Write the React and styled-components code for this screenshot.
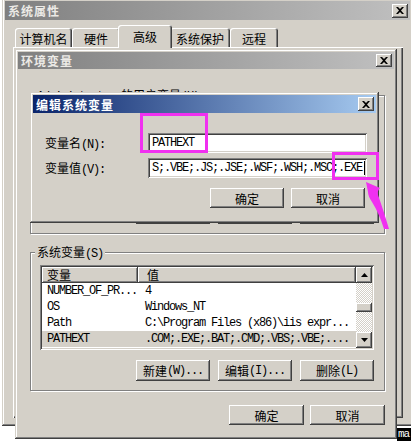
import React from 'react';
import styled, { createGlobalStyle, css } from 'styled-components';

const FACE = '#d4d0c8';
const CJK = '"Noto Sans CJK SC", "Liberation Sans", sans-serif';
const MONO = '"Liberation Mono", "DejaVu Sans Mono", monospace';

const GlobalStyle = createGlobalStyle`
  html, body { margin: 0; padding: 0; background: #fff; }
  body { font-family: ${CJK}; font-size: 12px; color: #000; }
  * { box-sizing: border-box; }
`;

const raised = css`
  box-shadow: inset -1px -1px #404040, inset 1px 1px #fff, inset -2px -2px #808080, inset 2px 2px ${FACE};
`;
const frame = css`
  box-shadow: inset -1px -1px #404040, inset 1px 1px ${FACE}, inset -2px -2px #808080, inset 2px 2px #fff;
`;
const sunken = css`
  box-shadow: inset 1px 1px #808080, inset -1px -1px #fff, inset 2px 2px #404040, inset -2px -2px ${FACE};
`;

const Screen = styled.div`
  position: relative;
  width: 411px;
  height: 441px;
  overflow: hidden;
  background: #fff;
`;

const TaskbarScrap = styled.div`
  position: absolute;
  right: 0;
  bottom: 0;
  width: 14px;
  height: 13px;
  background: #000;
  color: #fff;
  font-family: ${MONO};
  font-size: 11px;
  line-height: 13px;
  padding-left: 1px;
  overflow: hidden;
  letter-spacing: -1px;
`;

const Window = styled.section`
  position: absolute;
  left: ${p => p.$x}px;
  top: ${p => p.$y}px;
  width: ${p => p.$w}px;
  height: ${p => p.$h}px;
  padding: 3px;
  background: ${FACE};
  display: flex;
  flex-direction: column;
  ${frame}
`;

const TitleBar = styled.header`
  flex: none;
  height: ${p => p.$h}px;
  display: flex;
  align-items: center;
  justify-content: space-between;
  padding: 0 2px 0 3px;
  background: linear-gradient(to right, ${p => (p.$active ? '#0a246a, #a6caf0' : '#808080, #c0c0c0')});
  color: ${p => (p.$active ? '#fff' : '#eceae6')};
  font-family: ${CJK};
  font-weight: bold;
  font-size: 12px;
  letter-spacing: 1px;
  white-space: nowrap;
`;

const CloseBox = styled.span`
  width: 16px;
  height: ${p => p.$h}px;
  flex: none;
  display: flex;
  align-items: center;
  justify-content: center;
  background: ${FACE};
  ${raised}
`;

const CloseButton = ({ h }) => (
  <CloseBox $h={h}>
    <svg width="8" height="7" viewBox="0 0 8 7">
      <path d="M0 0h2l2 2 2-2h2L5 3.5 8 7H6L4 5 2 7H0l3-3.5z" fill="#000" />
    </svg>
  </CloseBox>
);

const TabArea = styled.div`
  flex: 1;
  display: flex;
  flex-direction: column;
  padding: 5px 7px 5px 8px;
`;

const TabStrip = styled.div`
  height: 22px;
  display: flex;
  align-items: flex-end;
  padding-left: 2px;
  flex: none;
`;

const Tab = styled.div`
  position: relative;
  z-index: ${p => (p.$active ? 1 : 0)};
  width: ${p => p.$w}px;
  height: ${p => (p.$active ? 23 : 19)}px;
  margin: 0 ${p => (p.$active ? -2 : 0)}px ${p => (p.$active ? -1 : 0)}px;
  padding-top: ${p => (p.$active ? 0 : 2)}px;
  background: ${FACE};
  border-radius: 3px 3px 0 0;
  box-shadow: inset 1px 1px #fff, inset -1px 0 #404040, inset -2px 0 #808080;
  display: flex;
  align-items: center;
  justify-content: center;
  font-size: 12px;
`;

const TabPanel = styled.div`
  flex: 1;
  box-shadow: inset 1px 1px #fff, inset -1px -1px #404040, inset -2px -2px #808080;
`;

const EnvBody = styled.div`
  flex: 1;
  display: flex;
  flex-direction: column;
  gap: 11px;
  padding: 19px 9px 0 12px;
`;

const GroupWrap = styled.div`
  position: relative;
  padding-top: 7px;
`;

const GroupFrame = styled.div`
  border: 1px solid #808080;
  box-shadow: inset 1px 1px #fff, 1px 1px #fff;
  padding: 12px 10px 9px 9px;
  display: flex;
  flex-direction: column;
  gap: 10px;
`;

const GroupCaption = styled.span`
  position: absolute;
  left: 5px;
  top: 0;
  padding: 0 2px;
  line-height: 14px;
  background: ${FACE};
  font-size: 12px;
  white-space: nowrap;
`;

const Latin = styled.span`
  font-family: ${MONO};
  font-size: 12px;
  letter-spacing: -1.2px;
`;

const ButtonRow = styled.div`
  display: flex;
  justify-content: flex-end;
  gap: ${p => p.$gap}px;
  margin-top: ${p => p.$mt || 0}px;
  padding-right: ${p => p.$pr || 0}px;
`;

const PushButton = styled.button`
  width: ${p => p.$w}px;
  height: ${p => p.$h}px;
  border: 0;
  padding: 0;
  background: ${FACE};
  font-family: ${CJK};
  font-size: 12px;
  color: #000;
  display: flex;
  align-items: center;
  justify-content: center;
  white-space: nowrap;
  ${raised}
`;

const ListBox = styled.div`
  height: ${p => p.$h}px;
  padding: 2px;
  background: #fff;
  display: flex;
  ${sunken}
`;

const ListMain = styled.div`
  flex: 1;
  min-width: 0;
  display: flex;
  flex-direction: column;
  overflow: hidden;
`;

const HeaderRow = styled.div`
  flex: none;
  height: 16px;
  display: flex;
`;

const HeaderCell = styled.div`
  width: ${p => (p.$w ? `${p.$w}px` : 'auto')};
  flex: ${p => (p.$w ? 'none' : 1)};
  padding-left: ${p => p.$pad}px;
  background: ${FACE};
  line-height: 16px;
  font-size: 12px;
  box-shadow: inset -1px -1px #404040, inset 1px 1px #fff, inset -2px -2px #808080;
`;

const Row = styled.div`
  height: 16px;
  display: flex;
  align-items: center;
  background: ${p => (p.$selected ? FACE : 'transparent')};
`;

const Cell = styled.div`
  width: ${p => (p.$w ? `${p.$w}px` : 'auto')};
  flex: ${p => (p.$w ? 'none' : 1)};
  padding-left: ${p => p.$pad}px;
  font-family: ${MONO};
  font-size: 12px;
  letter-spacing: -1.2px;
  white-space: nowrap;
  overflow: hidden;
`;

const ScrollBar = styled.div`
  width: 16px;
  flex: none;
  display: flex;
  flex-direction: column;
  background: repeating-conic-gradient(#fff 0 25%, ${FACE} 0 50%) 0 0 / 2px 2px;
`;

const ScrollButton = styled.div`
  height: 16px;
  flex: none;
  display: flex;
  align-items: center;
  justify-content: center;
  background: ${FACE};
  ${raised}
`;

const ScrollTrack = styled.div`
  flex: 1;
`;

const ScrollThumb = styled.div`
  height: 9px;
  margin-top: 20px;
  background: ${FACE};
  ${raised}
`;

const DialogBody = styled.div`
  flex: 1;
  display: flex;
  flex-direction: column;
  gap: 5px;
  padding: 20px 9px 0 12px;
`;

const FieldRow = styled.div`
  display: flex;
  align-items: center;
`;

const FieldLabel = styled.label`
  width: 103px;
  flex: none;
  font-size: 12px;
  white-space: nowrap;
`;

const TextBox = styled.div`
  flex: 1;
  height: 20px;
  padding: 0 4px;
  background: #fff;
  display: flex;
  align-items: center;
  font-family: ${MONO};
  font-size: 12px;
  letter-spacing: -1.2px;
  white-space: nowrap;
  overflow: hidden;
  ${sunken}
`;

const Caret = styled.span`
  width: 1px;
  height: 14px;
  margin-left: 2px;
  background: #000;
  flex: none;
`;

const Overlay = styled.svg`
  position: absolute;
  left: 0;
  top: 0;
  pointer-events: none;
`;

const tabs = [
  { label: '计算机名', w: 57 },
  { label: '硬件', w: 48 },
  { label: '高级', w: 54, active: true },
  { label: '系统保护', w: 60 },
  { label: '远程', w: 48 },
];

const systemVars = [
  ['NUMBER_OF_PR...', '4'],
  ['OS', 'Windows_NT'],
  ['Path', 'C:\\Program Files (x86)\\iis expr...'],
  ['PATHEXT', '.COM;.EXE;.BAT;.CMD;.VBS;.VBE;....', true],
];

const Arrow = ({ up }) => (
  <svg width="7" height="4" viewBox="0 0 7 4">
    <path d={up ? 'M3.5 0L7 4H0z' : 'M0 0h7L3.5 4z'} fill="#000" />
  </svg>
);

const VarButtons = () => (
  <ButtonRow $gap={8}>
    <PushButton $w={74} $h={21}>新建<Latin>(W)...</Latin></PushButton>
    <PushButton $w={74} $h={21}>编辑<Latin>(I)...</Latin></PushButton>
    <PushButton $w={74} $h={21}>删除<Latin>(L)</Latin></PushButton>
  </ButtonRow>
);

export default function App() {
  return (
    <>
      <GlobalStyle />
      <Screen>
        <TaskbarScrap>ma</TaskbarScrap>

        <Window $x={2} $y={-2} $w={411} $h={428}>
          <TitleBar $h={19}>
            <span>系统属性</span>
            <CloseButton h={14} />
          </TitleBar>
          <TabArea>
            <TabStrip>
              {tabs.map(t => (
                <Tab key={t.label} $w={t.w} $active={t.active}>{t.label}</Tab>
              ))}
            </TabStrip>
            <TabPanel />
          </TabArea>
        </Window>

        <Window $x={15} $y={49} $w={382} $h={390}>
          <TitleBar $h={17}>
            <span>环境变量</span>
            <CloseButton h={13} />
          </TitleBar>
          <EnvBody>
            <GroupWrap>
              <GroupCaption><Latin>Administrator </Latin>的用户变量<Latin>(U)</Latin></GroupCaption>
              <GroupFrame>
                <ListBox $h={85} />
                <VarButtons />
              </GroupFrame>
            </GroupWrap>
            <GroupWrap>
              <GroupCaption>系统变量<Latin>(S)</Latin></GroupCaption>
              <GroupFrame>
                <ListBox $h={85}>
                  <ListMain>
                    <HeaderRow>
                      <HeaderCell $w={96} $pad={5}>变量</HeaderCell>
                      <HeaderCell $pad={9}>值</HeaderCell>
                    </HeaderRow>
                    {systemVars.map(([name, value, sel]) => (
                      <Row key={name} $selected={sel}>
                        <Cell $w={96} $pad={5}>{name}</Cell>
                        <Cell $pad={7}>{value}</Cell>
                      </Row>
                    ))}
                  </ListMain>
                  <ScrollBar>
                    <ScrollButton><Arrow up /></ScrollButton>
                    <ScrollTrack><ScrollThumb /></ScrollTrack>
                    <ScrollButton><Arrow /></ScrollButton>
                  </ScrollBar>
                </ListBox>
                <VarButtons />
              </GroupFrame>
            </GroupWrap>
            <ButtonRow $gap={6} $mt={3}>
              <PushButton $w={75} $h={20}>确定</PushButton>
              <PushButton $w={75} $h={20}>取消</PushButton>
            </ButtonRow>
          </EnvBody>
        </Window>

        <Window $x={30} $y={92} $w={349} $h={131}>
          <TitleBar $h={18} $active>
            <span>编辑系统变量</span>
            <CloseButton h={14} />
          </TitleBar>
          <DialogBody>
            <FieldRow>
              <FieldLabel>变量名<Latin>(N):</Latin></FieldLabel>
              <TextBox>PATHEXT</TextBox>
            </FieldRow>
            <FieldRow>
              <FieldLabel>变量值<Latin>(V):</Latin></FieldLabel>
              <TextBox>S;.VBE;.JS;.JSE;.WSF;.WSH;.MSC;.EXE<Caret /></TextBox>
            </FieldRow>
            <ButtonRow $gap={7} $mt={5} $pr={2}>
              <PushButton $w={74} $h={20}>确定</PushButton>
              <PushButton $w={74} $h={20}>取消</PushButton>
            </ButtonRow>
          </DialogBody>
        </Window>

        <Overlay width="411" height="441" viewBox="0 0 411 441">
          <rect x="141.5" y="114.5" width="65" height="37" fill="none" stroke="#f030f0" strokeWidth="3" />
          <rect x="333.5" y="153.5" width="44" height="25" fill="none" stroke="#f030f0" strokeWidth="3" />
          <path
            d="M366 182 L380 188 Q377 191 378 195 Q383 209 389 229 L384 229 Q379 213 372 202 Q368 196 368 192 Z"
            fill="#f030f0"
          />
        </Overlay>
      </Screen>
    </>
  );
}
